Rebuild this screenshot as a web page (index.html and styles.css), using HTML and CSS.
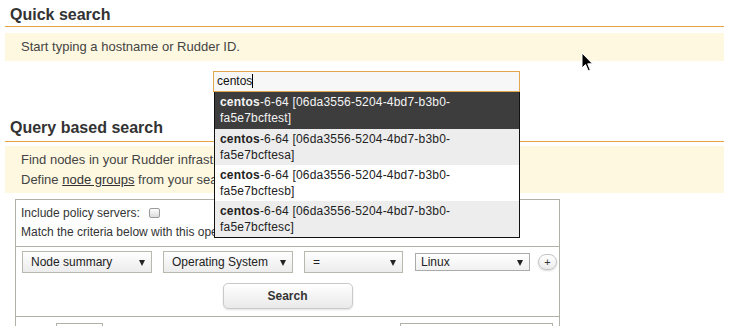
FILE: index.html
```html
<!DOCTYPE html>
<html lang="en">

<head>
  <meta charset="UTF-8">
  <meta name="viewport" content="width=device-width, initial-scale=1.0">
  <title>Rudder - Search nodes</title>
  <link rel="stylesheet" href="styles.css">
</head>

<body>
  <div class="page">
    <section class="quick-search">
      <h2 class="section-title">Quick search</h2>
      <div class="info-box info-single">Start typing a hostname or Rudder ID.</div>
      <div class="search-field">
        <div class="search-input">centos<span class="caret"></span></div>
        <ul class="suggestions">
          <li class="active"><b>centos</b>-6-64 [06da3556-5204-4bd7-b3b0-<br>fa5e7bcftest]</li>
          <li class="odd"><b>centos</b>-6-64 [06da3556-5204-4bd7-b3b0-<br>fa5e7bcftesa]</li>
          <li><b>centos</b>-6-64 [06da3556-5204-4bd7-b3b0-<br>fa5e7bcftesb]</li>
          <li class="odd"><b>centos</b>-6-64 [06da3556-5204-4bd7-b3b0-<br>fa5e7bcftesc]</li>
        </ul>
      </div>
    </section>

    <section class="query-search">
      <h2 class="section-title title-query">Query based search</h2>
      <div class="info-box info-multi">
        <p>Find nodes in your Rudder infrastructure.</p>
        <p>Define <a href="#">node groups</a> from your search results.</p>
      </div>

      <div class="query-form">
        <div class="query-options">
          <div class="option-line">Include policy servers: <span class="checkbox"></span></div>
          <div class="option-line">Match the criteria below with this operator:</div>
        </div>

        <div class="query-criteria">
          <div class="criteria-row">
            <div class="select select-object">Node summary</div>
            <div class="select select-attribute">Operating System</div>
            <div class="select select-comparator">=</div>
            <div class="select select-value">Linux</div>
            <button class="add-line">+</button>
          </div>
          <button class="search-button">Search</button>
        </div>

        <div class="query-footer">
          <span class="footer-input footer-input-small"></span>
          <span class="footer-input footer-input-wide"></span>
        </div>
      </div>
    </section>

    <svg class="mouse-cursor" width="13" height="21" viewBox="0 0 13 21">
      <path d="M1 1 L1 16 L4.5 12.5 L7.2 18.8 L9.3 17.9 L6.7 11.8 L11.5 11.8 Z" fill="#000" stroke="#fff" stroke-width="1"/>
    </svg>
  </div>
</body>

</html>
```

FILE: styles.css
```css
* {
  margin: 0;
  padding: 0;
  box-sizing: border-box;
}

body {
  font-family: "Liberation Sans", Arial, sans-serif;
  font-size: 12px;
  color: #333;
  background-color: white;
}

.page {
  position: relative;
  padding: 0 6px 0 5px;
  height: 326px;
  overflow: hidden;
}

.section-title {
  font-size: 16px;
  font-weight: bold;
  color: #333;
  line-height: 22px;
  padding: 4px 0 0 5px;
  border-bottom: 1px solid #e5a43f;
}

.title-query {
  padding: 2px 0 2px 5px;
}

.info-box {
  background-color: #fef8e1;
  color: #444;
  padding: 0 16px;
}

.info-single {
  margin-top: 6px;
  font-size: 13px;
  line-height: 28px;
}

.info-multi {
  margin-top: 4px;
  font-size: 13px;
  line-height: 20px;
  padding-top: 4px;
  padding-bottom: 3px;
}

.info-multi a {
  color: #333;
  text-decoration: underline;
}

/* quick search field + autocomplete */

.search-field {
  position: relative;
  margin: 10px 0 0 208px;
  width: 307px;
}

.search-input {
  height: 21px;
  border: 1px solid #e3a84d;
  background-color: #f7f7f7;
  color: #111;
  padding-left: 3px;
  line-height: 19px;
}

.caret {
  display: inline-block;
  width: 1px;
  height: 14px;
  background-color: #000;
  vertical-align: -3px;
}

.suggestions {
  position: absolute;
  top: 100%;
  left: 1px;
  width: 306px;
  list-style: none;
  border: 1px solid #111;
  border-top: none;
  background-color: white;
  z-index: 10;
}

.suggestions li {
  padding: 2px 5px;
  line-height: 16px;
  letter-spacing: 0.2px;
  color: #222;
  height: 36px;
}

.suggestions li.odd {
  background-color: #ededed;
}

.suggestions li.active {
  background-color: #3d3d3d;
  color: #f4f4f4;
  height: 37px;
}

/* query based search */

.query-search {
  margin-top: 23px;
}

.query-form {
  margin: 6px 0 0 10px;
  width: 545px;
  border: 1px solid #b1b1a9;
  border-bottom: none;
  height: 140px;
}

.query-options {
  padding: 4px 5px;
  line-height: 19px;
  color: #333;
  border-bottom: 1px solid #b1b1a9;
}

.checkbox {
  display: inline-block;
  width: 11px;
  height: 10px;
  margin-left: 6px;
  border: 1px solid #9a9a9a;
  border-radius: 2px;
  background: linear-gradient(#fdfdfd, #dcdcdc);
  vertical-align: -1px;
}

.query-criteria {
  padding: 4px 6px 7px;
  border-bottom: 1px solid #b1b1a9;
  display: flex;
  flex-direction: column;
  align-items: center;
}

.criteria-row {
  display: flex;
  align-items: center;
  align-self: stretch;
  height: 22px;
}

.select {
  position: relative;
  flex-shrink: 0;
  height: 22px;
  line-height: 20px;
  padding-left: 8px;
  border: 1px solid #b8b8ac;
  background: linear-gradient(#fefefe, #ececec);
  color: #222;
  margin-right: 11px;
}

.select::after {
  content: "";
  position: absolute;
  right: 6px;
  top: 8px;
  border-left: 3.5px solid transparent;
  border-right: 3.5px solid transparent;
  border-top: 6px solid #222;
}

.select-object {
  width: 130px;
}

.select-attribute {
  width: 130px;
}

.select-comparator {
  width: 99px;
  margin-right: 12px;
}

.select-value {
  width: 115px;
  height: 18px;
  line-height: 16px;
  padding-left: 5px;
  margin-right: 8px;
  border-color: #ababab;
  background: linear-gradient(#ffffff, #f0f0f0);
}

.select-value::after {
  top: 6px;
}

.add-line {
  flex-shrink: 0;
  width: 19px;
  height: 16px;
  border: 1px solid #c4c4c4;
  border-radius: 8px;
  background: linear-gradient(#ffffff, #ececec);
  box-shadow: 0 1px 2px rgba(0, 0, 0, 0.15);
  font-family: "Liberation Sans", Arial, sans-serif;
  font-size: 11px;
  line-height: 13px;
  color: #333;
}

.search-button {
  margin-top: 10px;
  width: 130px;
  height: 26px;
  border: 1px solid #c9c9c9;
  border-radius: 5px;
  background: linear-gradient(#ffffff, #e9e9e9);
  box-shadow: 0 1px 2px rgba(0, 0, 0, 0.12);
  font-family: "Liberation Sans", Arial, sans-serif;
  font-size: 12px;
  font-weight: bold;
  color: #333;
}

.query-footer {
  display: flex;
  justify-content: space-between;
  padding: 6px 6px 0 40px;
}

.footer-input {
  display: block;
  height: 22px;
  border: 1px solid #b1b1a9;
}

.footer-input-small {
  width: 47px;
}

.footer-input-wide {
  width: 153px;
}

.mouse-cursor {
  position: absolute;
  left: 581px;
  top: 52px;
}
```
